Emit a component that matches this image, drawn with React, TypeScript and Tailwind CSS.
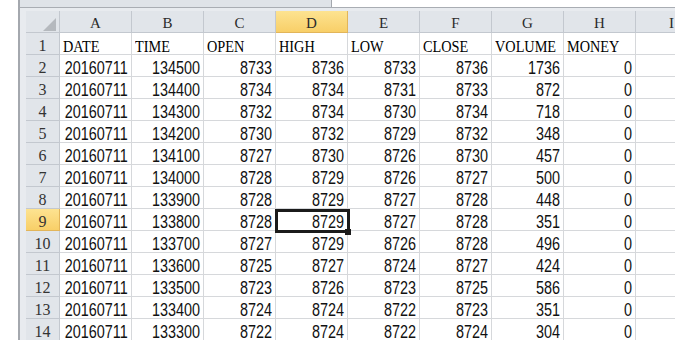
import React from "react";

const cols = ["A", "B", "C", "D", "E", "F", "G", "H", "I"];

const header = ["DATE", "TIME", "OPEN", "HIGH", "LOW", "CLOSE", "VOLUME", "MONEY"];

const data: number[][] = [
  [20160711, 134500, 8733, 8736, 8733, 8736, 1736, 0],
  [20160711, 134400, 8734, 8734, 8731, 8733, 872, 0],
  [20160711, 134300, 8732, 8734, 8730, 8734, 718, 0],
  [20160711, 134200, 8730, 8732, 8729, 8732, 348, 0],
  [20160711, 134100, 8727, 8730, 8726, 8730, 457, 0],
  [20160711, 134000, 8728, 8729, 8726, 8727, 500, 0],
  [20160711, 133900, 8728, 8729, 8727, 8728, 448, 0],
  [20160711, 133800, 8728, 8729, 8727, 8728, 351, 0],
  [20160711, 133700, 8727, 8729, 8726, 8728, 496, 0],
  [20160711, 133600, 8725, 8727, 8724, 8727, 424, 0],
  [20160711, 133500, 8723, 8726, 8723, 8725, 586, 0],
  [20160711, 133400, 8724, 8724, 8722, 8723, 351, 0],
  [20160711, 133300, 8722, 8724, 8722, 8724, 304, 0],
];

const serif = "font-['Liberation_Serif',serif]";
const sans = "font-['Liberation_Sans',sans-serif]";

function ColHeader({ label, selected }: { label: string; selected: boolean }) {
  return (
    <div
      className={
        "h-[22px] border-r border-b text-center text-[15px] leading-[15px] pt-[5px] text-[#2b2b2b] " +
        serif +
        " " +
        (selected
          ? "bg-[linear-gradient(to_bottom,#fde391,#f8cf68)] border-[#e2b55a]"
          : "bg-[#e1e5ea] border-[#c3c8cf]")
      }
    >
      {label}
    </div>
  );
}

function RowHeader({ n, selected }: { n: number; selected: boolean }) {
  return (
    <div
      className={
        "h-[22px] border-r border-b text-center text-[16px] leading-[16px] pt-[5px] text-[#333] " +
        serif +
        " " +
        (selected
          ? "bg-[linear-gradient(to_bottom,#fde391,#f8cf68)] border-[#e2b55a]"
          : "bg-[#e1e5ea] border-[#c3c8cf]")
      }
    >
      {n}
    </div>
  );
}

function TextCell({ text }: { text: string }) {
  return (
    <div
      className={
        "flex justify-start h-[22px] border-r border-b border-[#d6d8db] bg-white pl-[3px] pt-[5px] whitespace-nowrap text-[17px] leading-[17px] text-black " +
        serif
      }
    >
      <span className="block shrink-0 origin-left scale-x-[0.84]">{text}</span>
    </div>
  );
}

function NumCell({ value, selected }: { value?: number; selected?: boolean }) {
  return (
    <div
      className={
        "relative flex justify-end h-[22px] border-r border-b border-[#d6d8db] bg-white pr-[3px] pt-[5px] whitespace-nowrap text-[18px] leading-[17px] text-[#111] " +
        sans
      }
    >
      {value !== undefined && (
        <span className="block shrink-0 origin-right scale-x-[0.8]">{value}</span>
      )}
      {selected && (
        <>
          <div className="absolute z-10 left-[-1px] top-0 w-[75px] h-[24px] border-[3px] border-[#1b1b1b]" />
          <div className="absolute z-10 left-[69px] top-[20px] w-[6px] h-[6px] bg-[#1b1b1b]" />
        </>
      )}
    </div>
  );
}

export default function App() {
  return (
    <div className="w-[675px] h-[340px] overflow-hidden bg-white flex">
      <div className="w-[18px] shrink-0 bg-white" />
      <div className="flex-1 min-w-0 flex flex-col border-l-2 border-[#a4a8ae] bg-[#e8ebef]">
        <div className="h-[7px] shrink-0 flex">
          <div className="w-[312px] bg-[#dfe3e8] border-r border-[#a4a8ae]" />
          <div className="flex-1 bg-white" />
        </div>
        <div className="h-px shrink-0 bg-[#a9adb3]" />
        <div className="h-[3px] shrink-0" />
        <div className="flex min-h-0">
          <div className="w-[6px] shrink-0" />
          <div className="grid grid-cols-[34px_repeat(9,72px)] shrink-0">
            <div className="h-[22px] border-r border-b border-[#c3c8cf] bg-[#e1e5ea] relative">
              <svg className="absolute left-[17px] top-[7px]" width="13" height="13" viewBox="0 0 13 13">
                <polygon points="13,0 13,13 0,13" fill="#b5b9be" />
              </svg>
            </div>
            {cols.map((c) => (
              <ColHeader key={c} label={c} selected={c === "D"} />
            ))}
            <RowHeader n={1} selected={false} />
            {header.map((h) => (
              <TextCell key={h} text={h} />
            ))}
            <NumCell />
            {data.map((row, i) => (
              <React.Fragment key={i}>
                <RowHeader n={i + 2} selected={i + 2 === 9} />
                {row.map((v, j) => (
                  <NumCell key={j} value={v} selected={i + 2 === 9 && j === 3} />
                ))}
                <NumCell />
              </React.Fragment>
            ))}
          </div>
        </div>
      </div>
    </div>
  );
}
